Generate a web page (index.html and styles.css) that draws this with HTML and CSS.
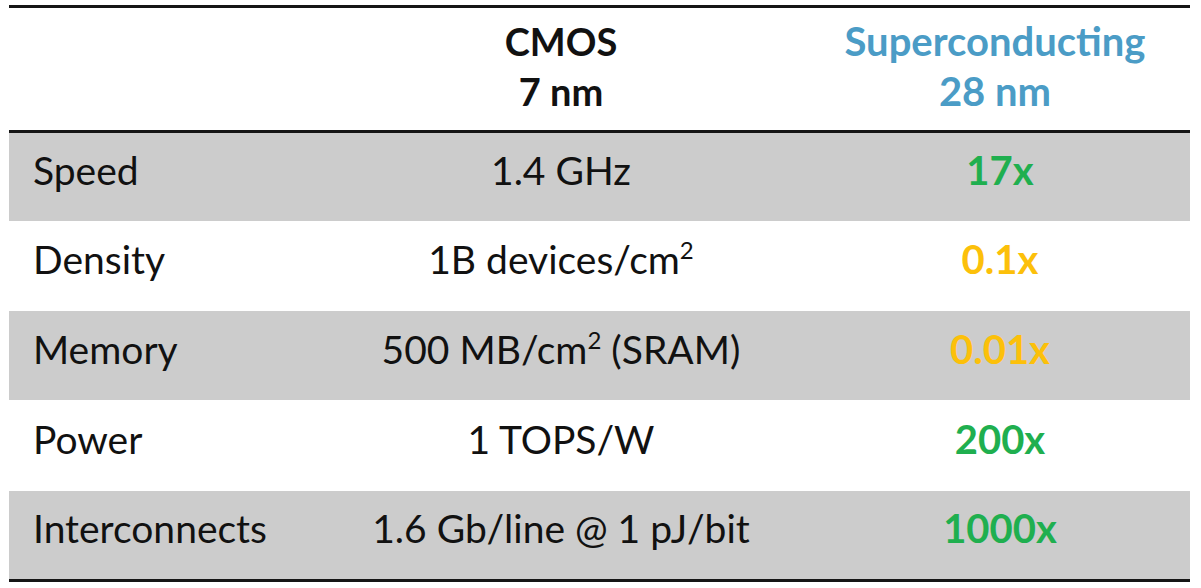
FILE: index.html
```html
<!DOCTYPE html>
<html>
<head>
<meta charset="utf-8">
<link rel="stylesheet" href="styles.css">
</head>
<body>
<table class="cmp">
  <colgroup>
    <col class="c1"><col class="c2"><col class="c3">
  </colgroup>
  <thead>
    <tr class="head">
      <th></th>
      <th class="mid">CMOS<br>7 nm</th>
      <th class="sc">Superconducting<br>28 nm</th>
    </tr>
  </thead>
  <tbody>
    <tr class="r gray h1"><td class="lbl">Speed</td><td class="mid">1.4 GHz</td><td class="val good">17x</td></tr>
    <tr class="r h2"><td class="lbl">Density</td><td class="mid">1B devices/cm<sup>2</sup></td><td class="val warn">0.1x</td></tr>
    <tr class="r gray h3"><td class="lbl">Memory</td><td class="mid">500 MB/cm<sup>2</sup> (SRAM)</td><td class="val warn">0.01x</td></tr>
    <tr class="r h4"><td class="lbl">Power</td><td class="mid">1 TOPS/W</td><td class="val good">200x</td></tr>
    <tr class="r gray h5"><td class="lbl">Interconnects</td><td class="mid">1.6 Gb/line @ 1 pJ/bit</td><td class="val good">1000x</td></tr>
  </tbody>
</table>
</body>
</html>
```

FILE: styles.css
```css
html, body {
  margin: 0;
  padding: 0;
  background: #ffffff;
}
body {
  padding: 5px 11px 0 9px;
  font-family: Lato, "Open Sans", sans-serif;
  color: #111111;
}
.cmp {
  width: 1181px;
  border-collapse: separate;
  border-spacing: 0;
  table-layout: fixed;
  border-top: 3px solid #151515;
  border-bottom: 3px solid #151515;
}
.c1 { width: 313px; }
.c2 { width: 478px; }
.c3 { width: 390px; }
.head th {
  height: 125px;
  box-sizing: border-box;
  border-bottom: 3px solid #151515;
  font-weight: 700;
  font-size: 40px;
  line-height: 50px;
  padding: 0 0 6px 0;
  vertical-align: middle;
}
.head .mid { font-size: 38px; }
.head .sc { color: #4b9cc6; }
td {
  font-size: 39px;
  padding: 0 0 14px 0;
  vertical-align: middle;
  white-space: nowrap;
  box-sizing: border-box;
}
.gray { background: #cccccc; }
.h1 td { height: 88px; }
.h2 td { height: 90px; }
.h3 td { height: 89px; }
.h4 td { height: 91px; }
.h5 td { height: 88px; }
.lbl { padding-left: 24px; text-align: left; }
.mid { text-align: center; }
.val { text-align: center; font-weight: 700; padding-left: 10px; font-size: 40px; }
.good { color: #1faf4f; }
.warn { color: #fcc00a; }
sup {
  font-size: 24px;
  line-height: 0;
  vertical-align: 15px;
}
```
